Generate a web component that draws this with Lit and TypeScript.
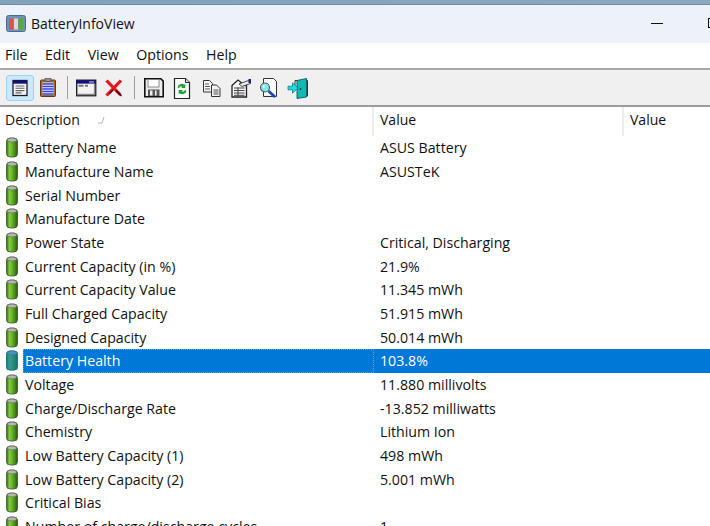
import { LitElement, html, css, svg } from "lit";
import { customElement } from "lit/decorators.js";

const rows: [string, string][] = [
  ["Battery Name", "ASUS Battery"],
  ["Manufacture Name", "ASUSTeK"],
  ["Serial Number", ""],
  ["Manufacture Date", ""],
  ["Power State", "Critical, Discharging"],
  ["Current Capacity (in %)", "21.9%"],
  ["Current Capacity Value", "11.345 mWh"],
  ["Full Charged Capacity", "51.915 mWh"],
  ["Designed Capacity", "50.014 mWh"],
  ["Battery Health", "103.8%"],
  ["Voltage", "11.880 millivolts"],
  ["Charge/Discharge Rate", "-13.852 milliwatts"],
  ["Chemistry", "Lithium Ion"],
  ["Low Battery Capacity (1)", "498 mWh"],
  ["Low Battery Capacity (2)", "5.001 mWh"],
  ["Critical Bias", ""],
  ["Number of charge/discharge cycles", "1"],
];

const battery = (sel: boolean) => html`<svg class="batt" width="14" height="21" viewBox="0 0 14 21">
  <defs>
    <linearGradient id="bg" x1="0" x2="1" y1="0" y2="0">
      <stop offset="0" stop-color="#2f6d12"/><stop offset=".28" stop-color="#86cc3c"/>
      <stop offset=".62" stop-color="#55a31f"/><stop offset="1" stop-color="#245a0e"/>
    </linearGradient>
  </defs>
  <rect x="1.5" y="1" width="11" height="19" rx="3.5" fill="url(#bg)" stroke="#44503c" stroke-width=".8"/>
  <ellipse cx="7" cy="3" rx="4.6" ry="1.9" fill="#b3b7af" stroke="#62685e" stroke-width=".6"/>
  ${sel ? svg`<rect x="1" y="0.5" width="12" height="20" rx="3.5" fill="#0a7fb8" opacity=".62"/>` : ""}
</svg>`;

const icons = {
  view: svg`<rect x="3" y="3.5" width="14" height="15" fill="#f7f7f7" stroke="#1a1a2a" stroke-width="1.3"/><rect x="3" y="3.5" width="14" height="3.2" fill="#10107a"/><path d="M5.5 9h9M5.5 11.3h9M5.5 13.6h9M5.5 15.9h6" stroke="#666" stroke-width="1.1"/>`,
  clip: svg`<rect x="2.5" y="3" width="15" height="16.5" rx="1" fill="#a8691d" stroke="#5c3a12" stroke-width="1"/><rect x="4.5" y="5.5" width="11" height="12.5" fill="#f5f5ff"/><path d="M4.5 7h11M4.5 9.5h11M4.5 12h11M4.5 14.5h11M4.5 17h11" stroke="#2b3df0" stroke-width="1.5"/><rect x="7" y="1.5" width="6" height="3" fill="#8f8f8f" stroke="#444" stroke-width=".6"/>`,
  win: svg`<rect x="1.7" y="3.2" width="19" height="15.5" fill="#f2f2f2" stroke="#222" stroke-width="1.4"/><rect x="1.7" y="3.2" width="19" height="3.4" fill="#10107a"/><path d="M14 5h5" stroke="#ddd" stroke-width="1"/><path d="M3.5 8.8h5M10 8.8h3" stroke="#777" stroke-width="2"/><path d="M2.4 17.5h17.6M19.6 7v10.5" stroke="#888" stroke-width="1.4"/>`,
  del: svg`<path d="M2.5 3.5 L16.5 18 M17 3.5 L2.5 18.5" stroke="#e8131b" stroke-width="3.2"/><path d="M5.5 16.5 L9 13 M12 13.5 L17.5 19" stroke="#2a0808" stroke-width="1.2"/>`,
  save: svg`<path d="M1.8 1.8h16l2.4 2.4v15.6h-18.4z" fill="#ececec" stroke="#111" stroke-width="1.6"/><rect x="5" y="2.6" width="11" height="7.4" fill="#fff" stroke="#777" stroke-width=".8"/><rect x="5" y="12.5" width="11.5" height="6.5" fill="#555"/><rect x="7" y="13.5" width="2.5" height="5" fill="#eee"/><rect x="12" y="13.5" width="1.6" height="5" fill="#eee"/>`,
  refresh: svg`<path d="M2.5 1.5h11l4 4v16h-15z" fill="#fdfdfd" stroke="#222" stroke-width="1.2"/><path d="M13.5 1.5v4h4" fill="#ddd" stroke="#222" stroke-width="1"/><path d="M5.5 10.5a4.2 4.2 0 0 1 6.8-2.7l1-1.2v4.4h-4.2l1.3-1.3a2.5 2.5 0 0 0-3.4 1.3z" fill="#16a52a"/><path d="M14.5 13.5a4.2 4.2 0 0 1-6.8 2.7l-1 1.2V13h4.2l-1.3 1.3a2.5 2.5 0 0 0 3.4-1.3z" fill="#16a52a"/>`,
  copy: svg`<path d="M2.5 3.5h6l3 3v8.5h-9z" fill="#f6f6f6" stroke="#333" stroke-width="1"/><path d="M10.5 8h5l3.5 3.5v8h-8.5z" fill="#f2f2f2" stroke="#333" stroke-width="1"/><path d="M4 7h4M4 9.5h5M4 12h5M12.5 13h5M12.5 15h5M12.5 17h5" stroke="#555" stroke-width="1"/>`,
  props: svg`<path d="M2 8.5l6-5.5 7 5.5h1.5V20H2z" fill="#f4f4f4" stroke="#222" stroke-width="1.3"/><path d="M4 11h10.5M4 13.5h10.5M4 16h10.5M4 18.3h10.5M8 10.5v8" stroke="#444" stroke-width="1"/><path d="M9 7 L18.5 3.5 L20.5 6.5 L12 9.5z" fill="#ececec" stroke="#333" stroke-width=".9"/><rect x="18.5" y="2" width="2.5" height="4" fill="#1a1a8a"/>`,
  find: svg`<path d="M4.5 1.5h10l3 3v15h-13z" fill="#fcfcfc" stroke="#333" stroke-width="1"/><circle cx="6" cy="10.5" r="4.5" fill="#7fe6ef" stroke="#555" stroke-width="1.1"/><path d="M9.5 14 L16 20" stroke="#1545c8" stroke-width="2.8"/><circle cx="5" cy="9.5" r="1.3" fill="#dffbff"/>`,
  exit: svg`<path d="M10 3.5 L19.5 1.5 V20 L10 21.5z" fill="#10b9b4" stroke="#0c5c5a" stroke-width=".9"/><path d="M10 3.5h-2v5M19.5 3.5h1V19h-1" fill="none" stroke="#333" stroke-width="1"/><path d="M1 9.2h4.5V5.8L11 11l-5.5 5.2v-3.4H1z" fill="#18e0ea" stroke="#0a6a70" stroke-width=".7"/><circle cx="13.5" cy="12" r=".9" fill="#033"/>`,
};

const ico = (content: unknown, w = 22, h = 22) =>
  html`<svg width=${w} height=${h} viewBox="0 0 ${w} ${h}">${content}</svg>`;

@customElement("app-root")
export class AppRoot extends LitElement {
  static styles = css`
    :host {
      display: block;
      width: 710px;
      height: 526px;
      overflow: hidden;
      background: #fff;
      font-family: "Open Sans", "Noto Sans", sans-serif;
      font-size: 14.2px;
      color: #111;
    }
    .strip {
      height: 4px;
      background: linear-gradient(90deg, #7fa3bb, #8aa9c0);
      border-bottom: 1px solid #6f8ba0;
    }
    .title {
      height: 38px;
      box-sizing: border-box;
      padding-bottom: 2px;
      overflow: hidden;
      background: #edf2fa;
      display: flex;
      align-items: center;
      padding-left: 6px;
      gap: 5px;
      font-size: 14px;
      color: #111;
    }
    .title .spacer { flex: 1; }
    .title .min {
      width: 12px;
      height: 1px;
      background: #111;
      margin-right: 40px;
    }
    .title .max {
      flex: none;
      width: 10px;
      height: 10px;
      border: 1px solid #111;
      margin-right: -8px;
      box-sizing: border-box;
    }
    .menu {
      height: 25px;
      box-sizing: border-box;
      padding-bottom: 2px;
      display: flex;
      align-items: center;
      padding-left: 5px;
      gap: 17.5px;
      background: #fff;
    }
    .toolbar {
      height: 35px;
      background: #f0f0f0;
      border-top: 2px solid #a9a9a9;
      border-bottom: 2px solid #9c9c9c;
      display: flex;
      align-items: center;
      padding-left: 6px;
    }
    .btn {
      width: 28px;
      height: 26px;
      display: flex;
      align-items: center;
      justify-content: center;
      box-sizing: border-box;
    }
    .btn.w { width: 28.8px; }
    .btn.on {
      background: #cce8ff;
      border: 1px solid #99d1ff;
      border-radius: 3px;
    }
    .sep {
      width: 1px;
      height: 23px;
      background: #a0a0a0;
    }
    .sep.a { margin: 0 4.5px; }
    .sep.b { margin: 0 5.5px; }
    .head {
      height: 28.8px;
      display: grid;
      grid-template-columns: 374px 250px 1fr;
      align-items: stretch;
      font-size: 14px;
    }
    .head > div {
      display: flex;
      align-items: center;
      padding-left: 6px;
      border-right: 2px solid #ececec;
      padding-bottom: 4px;
      box-sizing: border-box;
    }
    .head > div:first-child { padding-left: 5px; }
    .head > div:last-child { border-right: none; }
    .sort { margin-left: 17px; margin-top: 1px; }
    .list { display: grid; grid-auto-rows: 23.7px; }
    .row {
      display: grid;
      grid-template-columns: 23px 351px 1fr;
      align-items: center;
    }
    .row .i { padding-left: 5px; display: flex; }
    .row .d { padding-left: 2px; white-space: nowrap; }
    .row .v { padding-left: 6px; white-space: nowrap; }
    .row.sel .d, .row.sel .v {
      background: #0078d7;
      color: #fff;
      height: 100%;
      display: flex;
      align-items: center;
    }
    .row.sel .d {
      outline: 1px dotted #c8864a;
      outline-offset: -1px;
    }
  `;

  render() {
    return html`
      <div class="strip"></div>
      <div class="title">
        <svg width="20" height="17" viewBox="0 0 20 17">
          <rect x=".5" y=".5" width="19" height="16" rx="2" fill="#6f93b8" stroke="#4a6a8c"/>
          <rect x="3" y="3.5" width="4.5" height="11" fill="#d9534f"/>
          <rect x="8" y="3.5" width="4" height="11" fill="#d9d9d9"/>
          <rect x="12.5" y="3.5" width="4.5" height="11" fill="#5da83a"/>
        </svg>
        <span>BatteryInfoView</span>
        <span class="spacer"></span>
        <span class="min"></span><span class="max"></span>
      </div>
      <div class="menu">
        <span>File</span><span>Edit</span><span>View</span><span>Options</span><span>Help</span>
      </div>
      <div class="toolbar">
        <div class="btn on">${ico(icons.view, 20, 22)}</div>
        <div class="btn">${ico(icons.clip, 20, 22)}</div>
        <div class="sep a"></div>
        <div class="btn">${ico(icons.win)}</div>
        <div class="btn">${ico(icons.del, 20, 22)}</div>
        <div class="sep b"></div>
        <div class="btn w">${ico(icons.save)}</div>
        <div class="btn w">${ico(icons.refresh)}</div>
        <div class="btn w">${ico(icons.copy)}</div>
        <div class="btn w">${ico(icons.props)}</div>
        <div class="btn w">${ico(icons.find)}</div>
        <div class="btn w">${ico(icons.exit)}</div>
      </div>
      <div class="head">
        <div>Description<svg class="sort" width="8" height="8" viewBox="0 0 8 8"><path d="M1 7h4l2-6" fill="none" stroke="#b5b5b5"/></svg></div>
        <div>Value</div>
        <div>Value</div>
      </div>
      <div class="list">
        ${rows.map(
          ([d, v], i) => html`<div class="row ${i === 9 ? "sel" : ""}">
            <div class="i">${battery(i === 9)}</div>
            <div class="d">${d}</div>
            <div class="v">${v}</div>
          </div>`
        )}
      </div>
    `;
  }
}
